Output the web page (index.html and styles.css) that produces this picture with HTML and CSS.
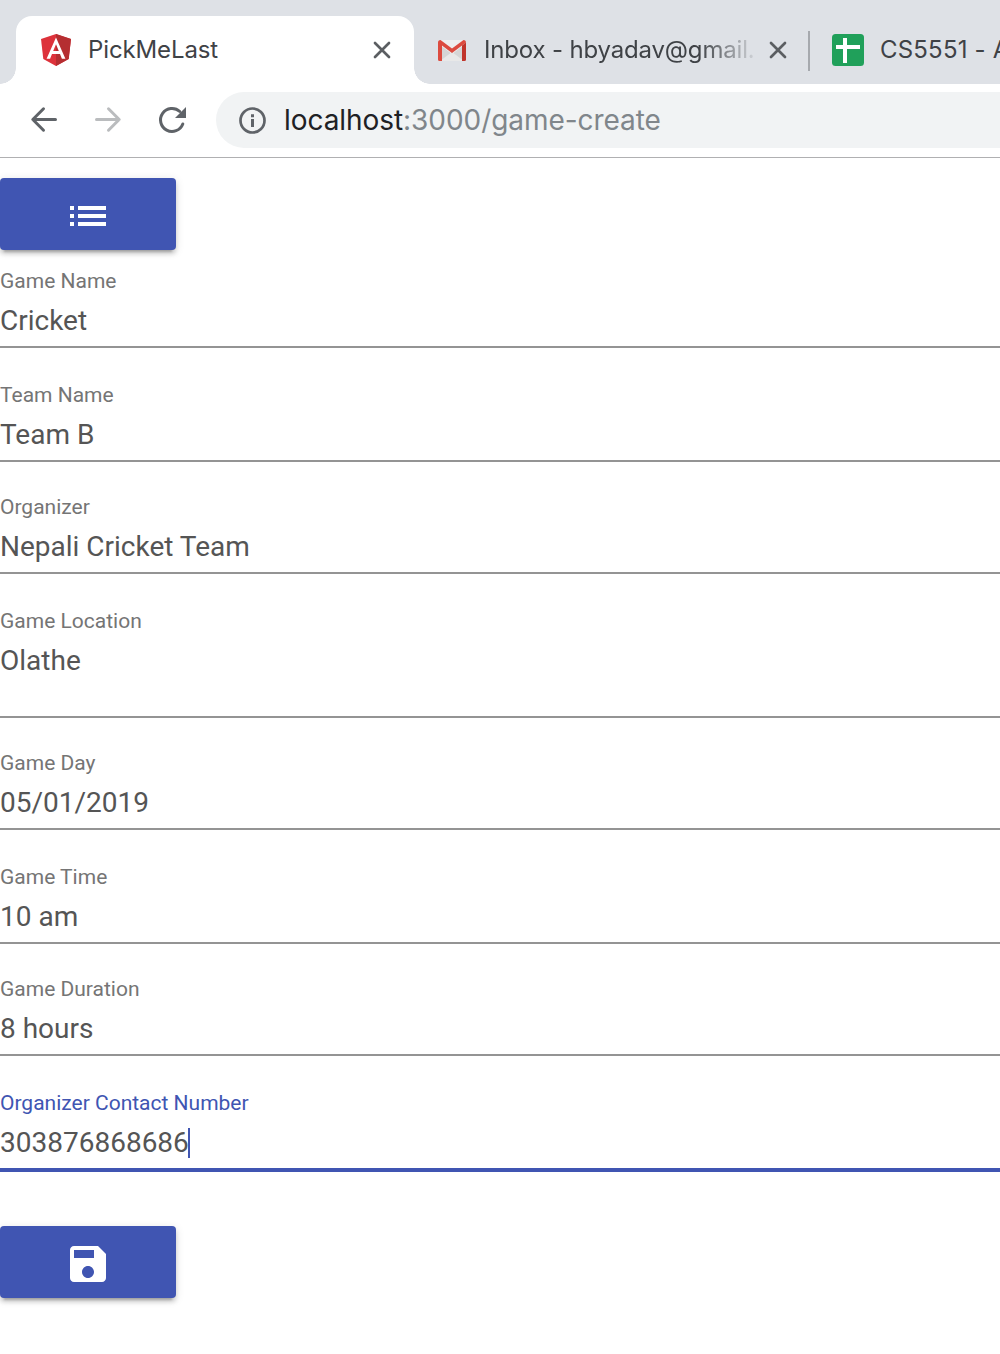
FILE: index.html
```
<!DOCTYPE html>
<html lang="en">
<head>
<meta charset="utf-8">
<title>PickMeLast</title>
<link rel="stylesheet" href="styles.css">
</head>
<body>
<header class="browser">
  <div class="tabs">
    <div class="tab tab-active">
      <svg class="favicon" viewBox="0 0 32 32"><path fill="#dd323b" d="M16 0 1 5l2.300 20L16 32l12.700-7L31 5z"/><path fill="#b52e31" d="M16 0v32l12.700-7L31 5z"/><path fill="#fff" fill-rule="evenodd" d="M16 3.500 6.600 24.700h3.500l1.900-4.700h8l1.900 4.700h3.500zm0 6.700 2.800 6.800h-5.600z"/></svg>
      <span class="tab-title title-app">PickMeLast</span>
      <svg class="close" viewBox="0 0 20 20"><path d="m3 3 14 14M17 3 3 17"/></svg>
    </div>
    <div class="tab tab-mail">
      <svg class="favicon" viewBox="0 0 32 32"><path fill="#eee" d="M4 6h24v21H4z"/><path fill="#d5d5d5" d="m4 11 12 9 12-9v16H4z"/><path fill="#e8e8e8" d="M4 27 16 18l12 9z"/><path fill="#dc4b3f" d="M2 8.500Q2 6 4.500 6L16 14.500 27.500 6Q30 6 30 8.500L16 19 6 11.500V27H3.500Q2 27 2 25.500z"/><path fill="#c0342b" d="M26 11.500 30 8.500V25.500Q30 27 28.500 27H26z"/></svg>
      <span class="tab-title title-mail">Inbox - hbyadav@gmail.</span>
      <svg class="close" viewBox="0 0 20 20"><path d="m3 3 14 14M17 3 3 17"/></svg>
    </div>
    <div class="tab tab-sheet">
      <svg class="favicon" viewBox="0 0 32 32"><rect width="32" height="32" rx="3.500" fill="#20a05a"/><path fill="#fff" d="M11 4h4v7h13v4H15v14h-4V15H4v-4h7z"/></svg>
      <span class="tab-title title-sheet">CS5551 - A</span>
    </div>
  </div>
  <div class="toolbar">
    <svg class="nav" viewBox="0 0 32 32"><path d="M27.500 15.500H5M15.500 4.800 4.800 15.500 15.500 26.200"/></svg>
    <svg class="nav nav-disabled" viewBox="0 0 32 32"><path d="M4.500 15.500H27M16.500 4.800 27.200 15.500 16.500 26.200"/></svg>
    <svg class="nav" viewBox="0 0 32 32"><path d="M23.800 7.500A11.500 11.500 0 1 0 26.800 20"/><path class="nav-head" d="M30 3v11H19z"/></svg>
    <div class="address">
      <svg class="info" viewBox="0 0 28 28"><circle cx="14.500" cy="14.500" r="12"/><path d="M13 8.200h3v3h-3zM13 13h3v8h-3z"/></svg>
      <span class="url"><span class="host">localhost</span>:3000/game-create</span>
    </div>
  </div>
</header>
<main class="page">
  <button class="button" aria-label="Game list"><svg class="icon icon-list" viewBox="0 0 24 24"><path d="M3 13h2v-2H3v2zm0 4h2v-2H3v2zm0-8h2V7H3v2zm4 4h14v-2H7v2zm0 4h14v-2H7v2zM7 7v2h14V7H7z"/></svg></button>
  <form class="form">
    <div class="field"><span class="label">Game Name</span><span class="value">Cricket</span></div>
    <div class="field wide-gap"><span class="label">Team Name</span><span class="value">Team B</span></div>
    <div class="field"><span class="label">Organizer</span><span class="value">Nepali Cricket Team</span></div>
    <div class="field wide-gap multiline"><span class="label">Game Location</span><span class="value">Olathe</span></div>
    <div class="field"><span class="label">Game Day</span><span class="value">05/01/2019</span></div>
    <div class="field wide-gap"><span class="label">Game Time</span><span class="value">10 am</span></div>
    <div class="field"><span class="label">Game Duration</span><span class="value">8 hours</span></div>
    <div class="field wide-gap focused"><span class="label">Organizer Contact Number</span><span class="value">303876868686<i class="caret"></i></span></div>
  </form>
  <button class="button" aria-label="Save"><svg class="icon" viewBox="0 0 24 24"><path d="M17 3H5c-1.110 0-2 .9-2 2v14c0 1.100.89 2 2 2h14c1.100 0 2-.9 2-2V7l-4-4zm-5 16c-1.660 0-3-1.340-3-3s1.340-3 3-3 3 1.340 3 3-1.340 3-3 3zm3-10H5V5h10v4z"/></svg></button>
</main>
</body>
</html>
```
FILE: styles.css
```
* { box-sizing: border-box; }
body { margin: 0; min-height: 1354px; background: #fff; overflow: hidden; font-family: Roboto, sans-serif; }
svg { display: block; flex: none; }

.browser { height: 158px; border-bottom: 1px solid #b0b0b2; font-family: Inter, sans-serif; overflow: hidden; }
.tabs { height: 84px; padding: 16px 0 0 16px; display: flex; background: #dee1e6; overflow: hidden; }
.tab { height: 68px; display: flex; align-items: center; flex: none; position: relative; }
.tab-active { width: 398px; padding: 0 22px 0 24px; background: #fff; border-radius: 16px 16px 0 0; }
.tab-active::before, .tab-active::after { content: ""; position: absolute; bottom: 0; width: 16px; height: 16px; }
.tab-active::before { right: 100%; background: radial-gradient(circle at 0 0, transparent 15.5px, #fff 16px); }
.tab-active::after { left: 100%; background: radial-gradient(circle at 100% 0, transparent 15.5px, #fff 16px); }
.tab-mail { width: 396px; padding: 0 22px; }
.tab-mail::after { content: ""; position: absolute; right: 0; top: 15px; width: 2px; height: 40px; background: #a6a9ae; }
.tab-sheet { width: 240px; padding-left: 22px; }
.favicon { width: 32px; height: 32px; margin-right: 16px; }
.tab-title { flex: 1; color: #3f4246; font-size: 24px; line-height: 32px; letter-spacing: -0.12px; white-space: nowrap; }
.title-mail { flex: none; width: 270px; margin-right: 14px; letter-spacing: -0.17px; -webkit-mask-image: linear-gradient(to right, #000 215px, transparent 276px); mask-image: linear-gradient(to right, #000 215px, transparent 276px); }
.title-sheet { letter-spacing: 0.2px; }
.close { width: 20px; height: 20px; fill: none; stroke: #5b5e62; stroke-width: 2.7; stroke-linecap: round; }

.toolbar { height: 72px; display: flex; align-items: center; padding-left: 28px; }
.nav { width: 32px; height: 32px; margin-right: 32px; fill: none; stroke: #5f6368; stroke-width: 3; stroke-linecap: round; stroke-linejoin: round; }
.nav-disabled { stroke: #babcbe; }
.nav-head { fill: #5f6368; stroke: none; }
.address { flex: 1; height: 56px; margin-left: -4px; padding-left: 22px; border-radius: 28px 0 0 28px; background: #f1f3f4; display: flex; align-items: center; }
.info { width: 28px; height: 28px; margin-right: 18px; fill: #5f6368; }
.info circle { fill: none; stroke: #5f6368; stroke-width: 2.7; }
.url { font-size: 28px; line-height: 40px; letter-spacing: -0.06px; color: #80868b; white-space: nowrap; }
.host { color: #202124; }

.page { padding-top: 20px; }
.button { display: flex; align-items: center; justify-content: center; width: 176px; height: 72px; padding: 0; border: 0; border-radius: 4px; background: #4055b2; box-shadow: 0 6px 2px -4px rgba(0,0,0,.2), 0 4px 4px rgba(0,0,0,.14), 0 2px 10px rgba(0,0,0,.12); }
.icon { width: 48px; height: 48px; fill: #fff; margin-top: 4px; }
.form { padding: 19px 0 54px; }
.field { display: flex; flex-direction: column; height: 79px; border-bottom: 2px solid #949494; }
.field + .field { margin-top: 33px; }
.field + .wide-gap { margin-top: 35px; }
.label { font-size: 21px; line-height: 24px; color: #757575; white-space: nowrap; }
.value { display: flex; align-items: center; margin-top: 12px; font-size: 28px; line-height: 32px; color: #555; white-space: nowrap; }
.multiline { height: 109px; }
.focused { height: 81px; border-bottom: 4px solid #4055b2; }
.focused .label { color: #4055b2; }
.caret { width: 2px; height: 30px; margin-left: -1px; background: #4055b2; }
```
